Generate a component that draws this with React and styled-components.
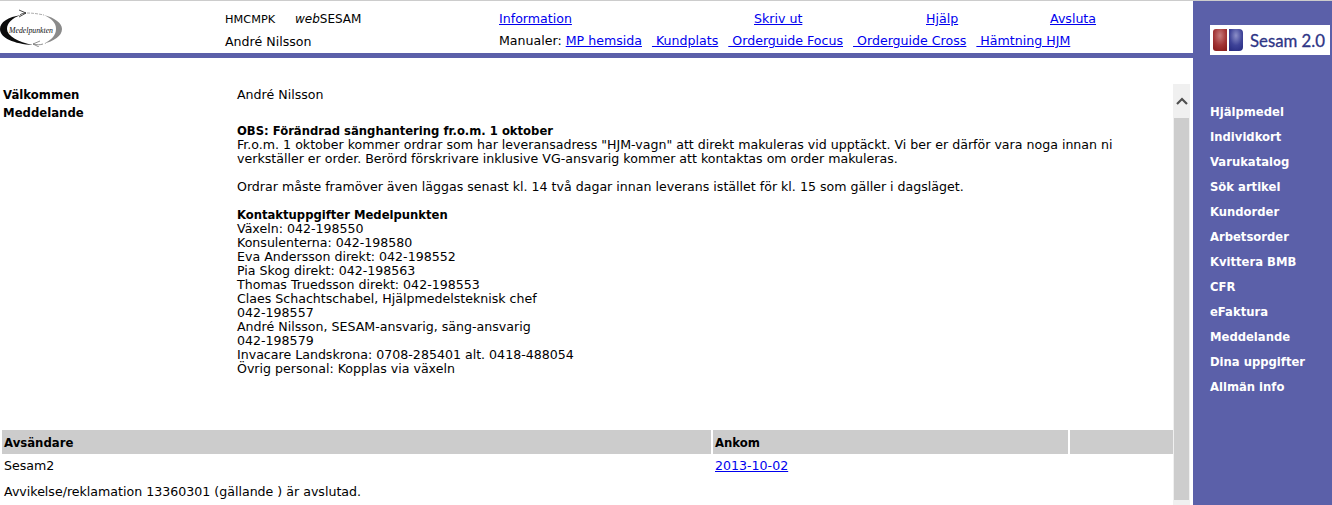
import React from 'react'
import styled, { createGlobalStyle } from 'styled-components'

const GlobalStyle = createGlobalStyle`
  html, body {
    margin: 0;
    padding: 0;
    height: 505px;
    overflow: hidden;
    background: #fff;
  }
  body {
    font-family: "DejaVu Sans", Verdana, sans-serif;
    font-size: 12.6px;
    color: #000;
  }
  a {
    color: #00e;
  }
  strong {
    font-size: 11.6px;
  }
`

const navItems = ['Hjälpmedel', 'Individkort', 'Varukatalog', 'Sök artikel', 'Kundorder', 'Arbetsorder', 'Kvittera BMB', 'CFR', 'eFaktura', 'Meddelande', 'Dina uppgifter', 'Allmän info']
const manuals = ['MP hemsida', ' Kundplats', ' Orderguide Focus', ' Orderguide Cross', ' Hämtning HJM']
const contacts = [
  'Växeln: 042-198550',
  'Konsulenterna: 042-198580',
  'Eva Andersson direkt: 042-198552',
  'Pia Skog direkt: 042-198563',
  'Thomas Truedsson direkt: 042-198553',
  'Claes Schachtschabel, Hjälpmedelsteknisk chef',
  '042-198557',
  'André Nilsson, SESAM-ansvarig, säng-ansvarig',
  '042-198579',
  'Invacare Landskrona: 0708-285401 alt. 0418-488054',
  'Övrig personal: Kopplas via växeln',
]

const MedelpunktenLogo = () => (
  <svg width="62" height="38" viewBox="0 0 62 38">
    <path d="M21 6 C 8 8 0 13 0 20 C 0 29 14 35 33 36 C 18 33 7 27 7 20 C 7 14 12 9 21 6 Z" fill="#0c0c0c" />
    <path d="M44 6 C 55 9 62 14 62 20 C 62 27 54 32 43 35 C 52 31 56 26 56 20 C 56 14 52 10 44 6 Z" fill="#8a8a8a" />
    <path d="M20 6 C 21 5 23 4 26 4" fill="none" stroke="#222" strokeWidth="0.8" />
    <path d="M19 1 L26 4 L19 8" fill="none" stroke="#222" strokeWidth="0.8" />
    <path d="M27 4 C 33 4 39 5 44 6" fill="none" stroke="#999" strokeWidth="0.8" strokeDasharray="3 1" />
    <path d="M33 35 C 37 36 40 36 43 35" fill="none" stroke="#777" strokeWidth="0.8" />
    <path d="M40 32 L33 35 L39 38" fill="none" stroke="#777" strokeWidth="0.8" />
    <text x="9" y="24" textLength="44" lengthAdjust="spacingAndGlyphs" fontSize="9" fontFamily="'Liberation Serif', serif" fontStyle="italic" fill="#111">Medelpunkten</text>
  </svg>
)

const SesamLogo = () => (
  <svg width="32" height="24" viewBox="0 0 32 24">
    <defs>
      <radialGradient id="red" cx="0.5" cy="0.3" r="0.75">
        <stop offset="0" stopColor="#c87c7c" />
        <stop offset="0.6" stopColor="#a23535" />
        <stop offset="1" stopColor="#8b1f1f" />
      </radialGradient>
      <radialGradient id="blue" cx="0.5" cy="0.3" r="0.75">
        <stop offset="0" stopColor="#8c8fc8" />
        <stop offset="0.6" stopColor="#3e4398" />
        <stop offset="1" stopColor="#2b2f85" />
      </radialGradient>
    </defs>
    <path d="M4 1 H15 V23 H4 Q1 23 1 20 V4 Q1 1 4 1 Z" fill="url(#red)" />
    <path d="M17 1 H27 Q31 1 31 5 V19 Q31 23 27 23 H17 Z" fill="url(#blue)" />
  </svg>
)

const App = () => (
  <Page>
    <GlobalStyle />
    <Main>
      <Header>
        <LogoCell><MedelpunktenLogo /></LogoCell>
        <InfoCell>
          <div><Site>HMCMPK</Site><Product><em>web</em>SESAM</Product></div>
          <div>André Nilsson</div>
        </InfoCell>
        <LinksCell>
          <TopLinks>
            <TopLink $width={255}><a href="#">Information</a></TopLink>
            <TopLink $width={172}><a href="#">Skriv ut</a></TopLink>
            <TopLink $width={124}><a href="#">Hjälp</a></TopLink>
            <TopLink><a href="#">Avsluta</a></TopLink>
          </TopLinks>
          <Manuals>
            <ManualLabel>Manualer:</ManualLabel>
            {manuals.map(m => <ManualLink key={m} href="#">{m}</ManualLink>)}
          </Manuals>
        </LinksCell>
      </Header>
      <Divider />
      <ContentRow>
        <Content>
          <Welcome>
            <Labels>
              <div>Välkommen</div>
              <div>Meddelande</div>
            </Labels>
            <Message>
              <div>André Nilsson</div>
              <Notice>
                <strong>OBS: Förändrad sänghantering fr.o.m. 1 oktober</strong><br />
                Fr.o.m. 1 oktober kommer ordrar som har leveransadress "HJM-vagn" att direkt makuleras vid upptäckt. Vi ber er därför vara noga innan ni verkställer er order. Berörd förskrivare inklusive VG-ansvarig kommer att kontaktas om order makuleras.
              </Notice>
              <Paragraph>Ordrar måste framöver även läggas senast kl. 14 två dagar innan leverans istället för kl. 15 som gäller i dagsläget.</Paragraph>
              <Paragraph>
                <strong>Kontaktuppgifter Medelpunkten</strong>
                {contacts.map(c => <div key={c}>{c}</div>)}
              </Paragraph>
            </Message>
          </Welcome>
          <Table>
            <HeadCell>Avsändare</HeadCell>
            <HeadCell>Ankom</HeadCell>
            <HeadCell />
            <BodyCell>Sesam2</BodyCell>
            <BodyCell><a href="#">2013-10-02</a></BodyCell>
            <BodyCell />
            <MessageCell>Avvikelse/reklamation 13360301 (gällande ) är avslutad.</MessageCell>
          </Table>
        </Content>
        <Scrollbar>
          <ScrollUp>
            <svg width="12" height="8" viewBox="0 0 12 8">
              <path d="M1 7 L6 2 L11 7" fill="none" stroke="#505050" strokeWidth="2.2" />
            </svg>
          </ScrollUp>
          <ScrollThumb />
        </Scrollbar>
      </ContentRow>
    </Main>
    <Sidebar>
      <SesamBox>
        <SesamLogo />
        <SesamText>Sesam 2.0</SesamText>
      </SesamBox>
      <Nav>
        {navItems.map(n => <NavItem key={n}>{n}</NavItem>)}
      </Nav>
    </Sidebar>
  </Page>
)

export default App

const Page = styled.div`
  display: flex;
  height: 505px;
  overflow: hidden;
  border-top: 1px solid #ccc;
  box-sizing: border-box;
`

const Main = styled.div`
  width: 1193px;
  display: flex;
  flex-direction: column;
`

const Header = styled.div`
  display: flex;
  height: 52px;
`

const LogoCell = styled.div`
  width: 225px;
  padding-top: 8px;
  box-sizing: border-box;
`

const InfoCell = styled.div`
  width: 274px;
  padding-top: 7px;
  line-height: 22px;
  height: 44px;
`

const Site = styled.span`
  display: inline-block;
  width: 70px;
  font-size: 11.3px;
`

const Product = styled.span`
  font-size: 12px;
`

const LinksCell = styled.div`
  flex: 1;
  padding-top: 7px;
  line-height: 22px;
`

const TopLinks = styled.div`
  display: flex;
`

const TopLink = styled.div`
  width: ${p => (p.$width ? `${p.$width}px` : 'auto')};
`

const Manuals = styled.div`
  white-space: pre;
`

const ManualLabel = styled.span`
  margin-right: 2px;
`

const ManualLink = styled.a`
  margin-left: 2px;
  margin-right: 8px;
`

const Divider = styled.div`
  height: 5px;
  background: #5b60a9;
`

const ContentRow = styled.div`
  flex: 1;
  display: flex;
  min-height: 0;
`

const Content = styled.div`
  width: 1173px;
  overflow: hidden;
`

const Welcome = styled.div`
  display: flex;
  height: 372px;
  padding-top: 28px;
  box-sizing: border-box;
  line-height: 14px;
`

const Labels = styled.div`
  width: 237px;
  padding-left: 3px;
  box-sizing: border-box;
  font-weight: bold;
  font-size: 11.7px;
  line-height: 18px;
`

const Message = styled.div`
  width: 880px;
  padding-top: 2px;
`

const Notice = styled.div`
  margin-top: 22px;
`

const Paragraph = styled.div`
  margin-top: 14px;
`

const Table = styled.div`
  display: grid;
  grid-template-columns: 709px 355px 1fr;
  column-gap: 2px;
  padding-left: 2px;
`

const HeadCell = styled.div`
  background: #ccc;
  height: 24px;
  line-height: 26px;
  font-weight: bold;
  font-size: 11.7px;
  padding-left: 2px;
`

const BodyCell = styled.div`
  height: 24px;
  line-height: 23px;
  padding-left: 2px;
`

const MessageCell = styled.div`
  grid-column: 1 / -1;
  line-height: 28px;
  padding-left: 2px;
`

const Scrollbar = styled.div`
  width: 17px;
  margin-top: 26px;
  background: #f0f0f0;
  display: flex;
  flex-direction: column;
  align-items: center;
`

const ScrollUp = styled.div`
  height: 34px;
  display: flex;
  align-items: center;
  justify-content: center;
`

const ScrollThumb = styled.div`
  width: 15px;
  height: 382px;
  background: #cdcdcd;
`

const Sidebar = styled.div`
  width: 139px;
  background: #5b60a9;
  padding-top: 24px;
  box-sizing: border-box;
`

const SesamBox = styled.div`
  margin-left: 17px;
  width: 120px;
  height: 30px;
  background: #fff;
  display: flex;
  align-items: center;
  padding-left: 2px;
  box-sizing: border-box;
`

const SesamText = styled.span`
  font-family: Lato, "Open Sans", sans-serif;
  font-size: 16.8px;
  -webkit-text-stroke: 0.3px #2e3586;
  color: #2e3586;
  margin-left: 6px;
  white-space: nowrap;
`

const Nav = styled.div`
  margin-top: 45px;
  padding-left: 17px;
`

const NavItem = styled.div`
  height: 25px;
  line-height: 25px;
  color: #fff;
  font-weight: bold;
  font-size: 11.6px;
`
